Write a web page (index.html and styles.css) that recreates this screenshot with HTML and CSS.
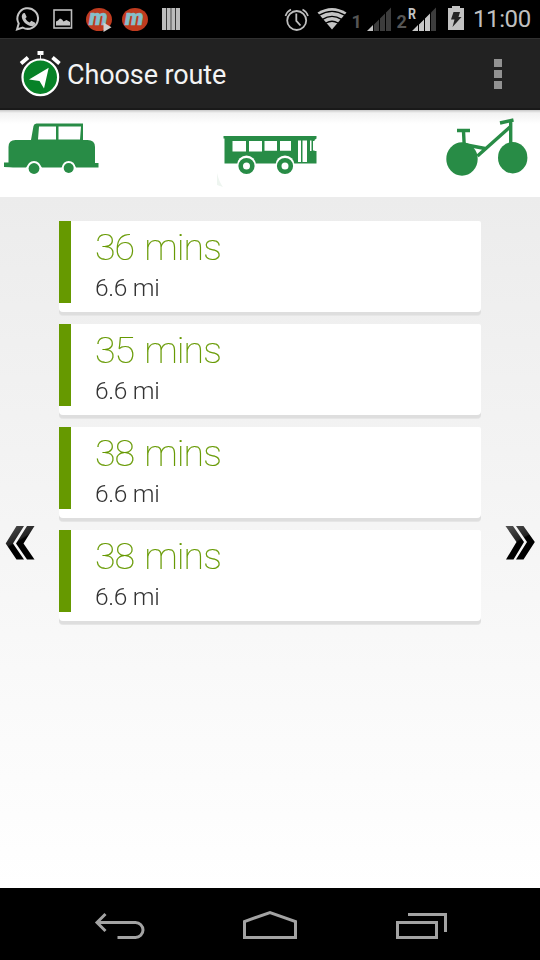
FILE: index.html
```
<!DOCTYPE html>
<html>
<head>
    <meta charset="UTF-8">
    <title>Choose route</title>
    <link rel="stylesheet" href="styles.css">
</head>
<body>

	<div class="status_bar">
	    <div class="notices">
	        <svg width="28" height="38" viewBox="14 0 28 38">
	            <path d="M17 29.5l1.7-6a10.3 10.3 0 1 1 4 4z" fill="none" stroke="#c4c4c4" stroke-width="2"/>
	            <path d="M23.2 13.2l1.6-.3 1.9 4-1.3 1.7c1 2 2.3 3.2 4.3 4l1.6-1.8 3.9 1.9c.2 2.4-1.7 3.6-3.7 3.5-5-.7-9.3-5-9.7-9.2-.1-1.6.4-2.9 1.4-3.8z" fill="#c4c4c4"/>
	        </svg>
	        <svg width="26" height="38" viewBox="50 0 26 38">
	            <rect x="54" y="10" width="17.5" height="18" fill="none" stroke="#bdbdbd" stroke-width="1.6"/>
	            <path d="M56 25.5v-4l2-1 2-2 2 1 1.5 2 3-1.5 3.5 2v3.5z" fill="#c4c4c4"/>
	        </svg>
	        <svg width="30" height="38" viewBox="84 0 30 38">
	            <ellipse cx="99" cy="19.5" rx="13" ry="11.5" fill="#bf3b1f"/>
	            <text class="m_text" x="89" y="24.5">m</text>
	            <path d="M103.5 22.5v9.5l8-4.7z" fill="#d0d0d0"/>
	        </svg>
	        <svg width="28" height="38" viewBox="122 0 28 38">
	            <ellipse cx="135" cy="19.5" rx="13" ry="11.5" fill="#bf3b1f"/>
	            <text class="m_text" x="125" y="24.5">m</text>
	        </svg>
	        <svg width="24" height="38" viewBox="158 0 24 38">
	            <path d="M162 8h4v22h-4zM166.7 8h4v22h-4zM171.3 8h4v22h-4zM176 8h4v22h-4z" fill="#bcbcbc"/>
	        </svg>
	    </div>
	    <div class="system">
	        <svg width="30" height="38" viewBox="282 0 30 38" fill="none" stroke="#bebebe">
	            <circle cx="296.7" cy="20.5" r="9.5" stroke-width="1.8"/>
	            <path d="M296.3 13.5v7.3l4.2 4.7" stroke-width="1.8"/>
	            <path d="M285.5 16q1.5-4.5 5.5-6.5M308 16q-1.5-4.5-5.5-6.5" stroke-width="1.7"/>
	        </svg>
	        <svg class="wifi" width="34" height="38" viewBox="315 0 34 38">
	            <path d="M332 29.5l-14.5-17q14.5-9 29 0z" fill="#c4c4c4"/>
	            <path d="M319.3 15.2q12.7-7.6 25.4 0M322.5 19.3q9.5-5.8 19 0M326 23q6-3.5 12 0" fill="none" stroke="#000" stroke-width="1.4"/>
	        </svg>
	        <svg width="42" height="38" viewBox="351 0 42 38">
	            <text class="sim" x="351.5" y="28">1</text>
	            <path d="M373 25v6h-6z" fill="#c4c4c4"/>
	            <path d="M374 24.5l5-5V31h-5zM380 18.5l5-5V31h-5zM386 12.5l5-5V31h-5z" fill="#3c3c3c"/>
	        </svg>
	        <svg width="44" height="38" viewBox="395 0 44 38">
	            <text class="sim" x="396.5" y="28">2</text>
	            <text class="roam" x="408" y="18.5" textLength="8" lengthAdjust="spacingAndGlyphs">R</text>
	            <path d="M418 25v6h-6zM419 24.5l5-5V31h-5zM425 18.5l5-5V31h-5z" fill="#c8c8c8"/>
	            <path d="M431 12.5l5-5V31h-5z" fill="#3c3c3c"/>
	        </svg>
	        <svg class="battery" width="20" height="38" viewBox="446 0 20 38">
	            <path d="M452 6h8v2h4v22h-16V8h4z" fill="#c2c2c2"/>
	            <path d="M453.5 12h6.5l-1.5 5h3l-9 10 2-7.5h-3.5z" fill="#222"/>
	        </svg>
	        <span class="clock">11:00</span>
	    </div>
	</div>

	<div class="action_bar">
	    <svg width="44" height="50" viewBox="18 49 44 50">
	        <path d="M37.5 51h6v4h-6z" fill="#fff"/>
	        <path d="M40.5 54v5" stroke="#ddd"/>
	        <path d="M21 63.5l7-6M52.5 57.5l7 6" stroke="#fff" stroke-width="3.8"/>
	        <circle cx="40.3" cy="77.3" r="17.8" fill="#078227" stroke="#fff" stroke-width="2.2"/>
	        <path d="M48.7 67.7L29 79.5l10.5 1.5 4.5 7.5z" fill="#fff"/>
	    </svg>
	    <h1>Choose route</h1>
	    <div class="more"><i></i><i></i><i></i></div>
	</div>

	<div class="modes">
	    <svg width="100" height="87" viewBox="0 110 100 87">
	        <path d="M4 162.5h4.5V147q0-7 7-7H31l2.5-14q.5-2.5 3-2.5H83V140h4.5q7.5 0 7.5 7v16H98.5v4.5H76q-2-4.5-7-4.5t-7.5 4.500H42q-3-4.500-8-4.500t-8 4.500H13q-2-.5-9-.5z" fill="#288c46"/>
	        <path d="M39 126.5H56v13H38zM58.5 126.5H81l-1 13H58.5z" fill="#fff"/>
	        <circle cx="34" cy="168" r="7" fill="#fff"/>
	        <circle cx="68.7" cy="167.5" r="6.6" fill="#fff"/>
	        <circle cx="34" cy="168.5" r="5.4" fill="#288c46"/>
	        <circle cx="68.7" cy="168" r="5" fill="#288c46"/>
	    </svg>
	    <svg width="108" height="87" viewBox="216 110 108 87">
	        <path d="M217 173v12l6 2q-4-5-6-14z" fill="#eef5f0"/>
	        <path d="M223.5 136h93v2.5l-2 1.5v11h2v12.5h-92V138.5h-1z" fill="#288c46"/>
	        <path d="M232.5 141H246v10.5h-13.5zM249 141h13v10.5h-13zM264.5 141h12.5v9.7h-12.500zM280 141h11v9.700h-11zM298 140.500h3v21.500h-3zM302.500 140.500h4.500v21.500h-4.500zM310 140.500h1.500v10.500H310zM313 141h4v9.500h-4z" fill="#fff"/>
	        <circle cx="246.5" cy="165" r="9.5" fill="#fff"/>
	        <circle cx="285" cy="165" r="9.5" fill="#fff"/>
	        <circle cx="246.5" cy="166" r="5.8" fill="#fff" stroke="#288c46" stroke-width="4.6"/>
	        <circle cx="285" cy="166" r="5.8" fill="#fff" stroke="#288c46" stroke-width="4.6"/>
	    </svg>
	    <svg width="100" height="87" viewBox="440 110 100 87">
	        <ellipse cx="462" cy="159" rx="15.7" ry="16.7" fill="#288c46"/>
	        <ellipse cx="512.7" cy="157.7" rx="14.7" ry="15.7" fill="#288c46"/>
	        <path d="M457 130.5h13M463.5 131l.7 14M464 144.5l21 4M477.5 156L510 127M510.7 145v-24M500 123l13.5-3" fill="none" stroke="#288c46" stroke-width="3.4"/>
	    </svg>
	</div>

	<div class="content">
	    <svg class="arrow" width="34" height="40" viewBox="3 522.5 34 40">
	        <linearGradient id="shine" x1="0" y1="0" x2="0.5" y2="1">
	            <stop offset="0" stop-color="#555"/>
	            <stop offset="0.5" stop-color="#222"/>
	            <stop offset="0.55" stop-color="#000"/>
	        </linearGradient>
	        <path d="M16.5 525.5h7.500L13 543l11 16h-7.500L5.700 543zM27 525.500h7.500L23.500 543l11 16H27L16 543z" fill="url(#shine)"/>
	    </svg>

	    <ul class="routes">
	        <li>
	            <div class="mark"></div>
	            <div class="info"><h2>36 mins</h2><p>6.6 mi</p></div>
	        </li>
	        <li>
	            <div class="mark"></div>
	            <div class="info"><h2>35 mins</h2><p>6.6 mi</p></div>
	        </li>
	        <li>
	            <div class="mark"></div>
	            <div class="info"><h2>38 mins</h2><p>6.6 mi</p></div>
	        </li>
	        <li>
	            <div class="mark"></div>
	            <div class="info"><h2>38 mins</h2><p>6.6 mi</p></div>
	        </li>
	    </ul>

	    <svg class="arrow" width="34" height="40" viewBox="503 522.5 34 40">
	        <path d="M505.5 525.5h7.500L524 541.500l-10.500 17.500H506L516.500 541.500zM516 525.500h7.500l11.300 16L523.500 559H516l11-17.500z" fill="url(#shine)"/>
	    </svg>
	</div>

	<div class="nav_bar">
	    <svg width="54" height="40" viewBox="93 904 54 40">
	        <path d="M105.5 914l-8.5 8.5 8.5 8.5M98 922.5h37.5a7.5 7.5 0 0 1 0 15H117.5" fill="none" stroke="#a3a3a3" stroke-width="3"/>
	    </svg>
	    <svg width="59" height="40" viewBox="241 904 59 40">
	        <path d="M244.5 937.5V921.5l25.5-9 25.5 9v16z" fill="none" stroke="#a3a3a3" stroke-width="3"/>
	    </svg>
	    <svg width="54" height="40" viewBox="394 904 54 40">
	        <path d="M397.5 922.5h39v15h-39zM408 914.5h37.5V932" fill="none" stroke="#a3a3a3" stroke-width="3"/>
	    </svg>
	</div>

</body>
</html>
```
FILE: styles.css
```
*{
    margin: 0;
    padding: 0;
    box-sizing: border-box;
}
body{
    width: 540px;
    height: 960px;
    display: flex;
    flex-direction: column;
    overflow: hidden;
    font-family: Roboto, sans-serif;
    background: #fff;
}
svg{
    display: block;
    flex: none;
}
.status_bar{
    height: 38px;
    display: flex;
    justify-content: space-between;
    padding: 0 9px 0 14px;
    background: #000;
}
.notices{
    display: flex;
    gap: 8px;
}
.m_text{
    font: italic 900 22px Roboto, sans-serif;
    fill: #86bfca;
    stroke: #86bfca;
    stroke-width: 0.6px;
}
.system{
    display: flex;
    align-items: center;
    gap: 2px;
}
.wifi{
    margin-left: 1px;
}
.battery{
    margin-left: 5px;
}
.sim{
    font-size: 18px;
    font-weight: bold;
    fill: #555;
}
.roam{
    font-size: 14px;
    font-weight: bold;
    fill: #c4c4c4;
}
.clock{
    width: 58px;
    margin-left: 5px;
    font-size: 24px;
    line-height: 38px;
    letter-spacing: -0.4px;
    color: #c0c0c0;
}
.action_bar{
    height: 72px;
    display: flex;
    align-items: center;
    padding: 0 38px 0 18px;
    background: #222;
    border-top: 1px solid #303030;
    border-bottom: 2px solid #191919;
}
.action_bar h1{
    margin: 2px 0 0 5px;
    font-size: 27px;
    font-weight: normal;
    letter-spacing: -0.1px;
    color: #f3f3f3;
}
.more{
    margin-left: auto;
    display: flex;
    flex-direction: column;
    gap: 3px;
}
.more i{
    width: 8px;
    height: 8px;
    background: #929292;
}
.modes{
    height: 87px;
    display: flex;
    justify-content: space-between;
    background: linear-gradient(#c8c8c8, #f2f2f2 3px, #fff 14px);
}
.content{
    height: 691px;
    display: flex;
    align-items: center;
    justify-content: space-between;
    padding: 0 3px;
    background: linear-gradient(#ececec, #fff);
}
.routes{
    align-self: flex-start;
    width: 422px;
    margin-top: 24px;
    list-style-type: none;
}
.routes li{
    display: flex;
    height: 91px;
    margin-bottom: 12px;
    background: #fff;
    border-radius: 0 2px 4px 4px;
    box-shadow: 0 3px 0 #dedede, 0 4px 0 #e6e6e6;
}
.mark{
    width: 12px;
    height: 82px;
    background: #669900;
}
.info{
    padding: 3px 0 0 24px;
    will-change: transform;
}
.info h2{
    font-size: 37.5px;
    font-weight: 100;
    line-height: 46px;
    letter-spacing: -0.95px;
    word-spacing: 2px;
    color: #669900;
    -webkit-text-stroke: 0.2px #669900;
}
.info p{
    margin-top: 1px;
    font-size: 24.5px;
    font-weight: 300;
    line-height: 34px;
    letter-spacing: -0.3px;
    color: #333;
}
.nav_bar{
    height: 72px;
    display: flex;
    align-items: center;
    justify-content: space-between;
    padding: 0 92px 0 93px;
    background: #000;
}
```
